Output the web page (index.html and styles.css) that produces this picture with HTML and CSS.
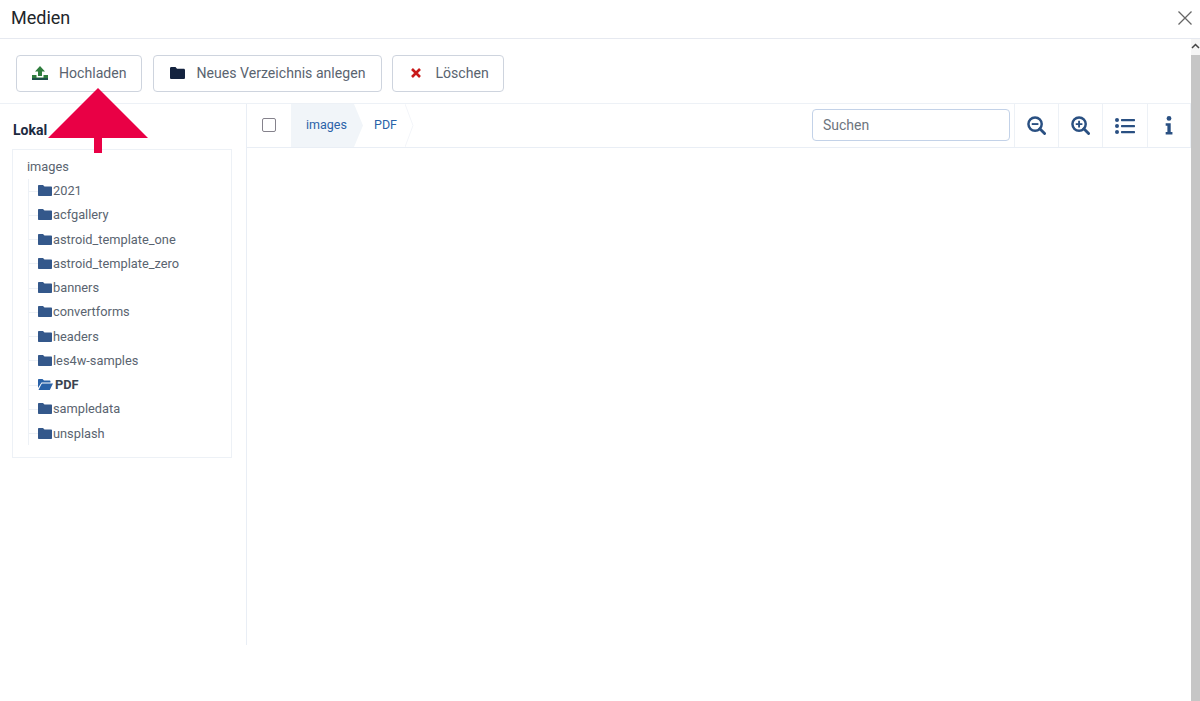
FILE: index.html
```html
<!DOCTYPE html>
<html lang="de">
<head>
<meta charset="utf-8">
<title>Medien</title>
<link rel="stylesheet" href="styles.css">
</head>
<body>
<div class="modal">
  <header class="modal-head">
    <h1 class="modal-title">Medien</h1>
    <svg class="close" width="16" height="16" viewBox="0 0 16 16"><path d="M1.500 1.500 14.500 14.500M14.500 1.500 1.500 14.500" stroke="#666" stroke-width="1.3" fill="none"/></svg>
  </header>
  <div class="modal-body">
    <div class="content">
      <div class="toolbar">
        <button class="btn btn-upload">
          <svg class="btn-ico" width="16" height="14" viewBox="0 0 16 14"><path d="M8 0 13 5.500H10V10H6V5.500H3Z" fill="#2f7d3e"/><path d="M0 9H4.500V11.500H11.500V9H16V14H0Z" fill="#2f7d3e"/><path d="M0 12H16V14H0Z" fill="#1f4f4a"/></svg>
          Hochladen
        </button>
        <button class="btn btn-new">
          <svg class="btn-ico folder-dark" width="15" height="12" viewBox="0 0 15 12"><path d="M0 1.300C0 .6.600 0 1.300 0H5.500L7 1.800H13.700C14.400 1.800 15 2.400 15 3.100V10.700C15 11.400 14.400 12 13.700 12H1.300C.6 12 0 11.400 0 10.700Z"/></svg>
          Neues Verzeichnis anlegen
        </button>
        <button class="btn btn-delete">
          <svg class="btn-ico" width="15" height="12" viewBox="0 0 15 12"><path d="M4 2 12 10M12 2 4 10" stroke="#c81a1a" stroke-width="2.600" fill="none"/></svg>
          Löschen
        </button>
      </div>
      <div class="workspace">
        <aside class="sidebar">
          <div class="sidebar-title">Lokal</div>
          <div class="tree">
            <div class="tree-root">images</div>
            <ul class="tree-list">
              <li class="tree-item"><svg class="fold" viewBox="0 0 14 11"><path d="M0 1C0 .4.400 0 1 0H5L6.500 1.500H13C13.600 1.500 14 1.900 14 2.500V10C14 10.600 13.600 11 13 11H1C.4 11 0 10.600 0 10Z"/></svg>2021</li>
              <li class="tree-item"><svg class="fold" viewBox="0 0 14 11"><path d="M0 1C0 .4.400 0 1 0H5L6.500 1.500H13C13.600 1.500 14 1.900 14 2.500V10C14 10.600 13.600 11 13 11H1C.4 11 0 10.600 0 10Z"/></svg>acfgallery</li>
              <li class="tree-item"><svg class="fold" viewBox="0 0 14 11"><path d="M0 1C0 .4.400 0 1 0H5L6.500 1.500H13C13.600 1.500 14 1.900 14 2.500V10C14 10.600 13.600 11 13 11H1C.4 11 0 10.600 0 10Z"/></svg>astroid_template_one</li>
              <li class="tree-item"><svg class="fold" viewBox="0 0 14 11"><path d="M0 1C0 .4.400 0 1 0H5L6.500 1.500H13C13.600 1.500 14 1.900 14 2.500V10C14 10.600 13.600 11 13 11H1C.4 11 0 10.600 0 10Z"/></svg>astroid_template_zero</li>
              <li class="tree-item"><svg class="fold" viewBox="0 0 14 11"><path d="M0 1C0 .4.400 0 1 0H5L6.500 1.500H13C13.600 1.500 14 1.900 14 2.500V10C14 10.600 13.600 11 13 11H1C.4 11 0 10.600 0 10Z"/></svg>banners</li>
              <li class="tree-item"><svg class="fold" viewBox="0 0 14 11"><path d="M0 1C0 .4.400 0 1 0H5L6.500 1.500H13C13.600 1.500 14 1.900 14 2.500V10C14 10.600 13.600 11 13 11H1C.4 11 0 10.600 0 10Z"/></svg>convertforms</li>
              <li class="tree-item"><svg class="fold" viewBox="0 0 14 11"><path d="M0 1C0 .4.400 0 1 0H5L6.500 1.500H13C13.600 1.500 14 1.900 14 2.500V10C14 10.600 13.600 11 13 11H1C.4 11 0 10.600 0 10Z"/></svg>headers</li>
              <li class="tree-item"><svg class="fold" viewBox="0 0 14 11"><path d="M0 1C0 .4.400 0 1 0H5L6.500 1.500H13C13.600 1.500 14 1.900 14 2.500V10C14 10.600 13.600 11 13 11H1C.4 11 0 10.600 0 10Z"/></svg>les4w-samples</li>
              <li class="tree-item active"><svg class="fold-open" viewBox="0 0 15 11"><path d="M0 1C0 .4.400 0 1 0H4.500L6 1.500H11.500C12.100 1.500 12.500 1.900 12.500 2.500V3.500H3.500L0 9Z"/><path d="M3.800 4.500H15L11.800 11H0.500Z"/></svg><span>PDF</span></li>
              <li class="tree-item"><svg class="fold" viewBox="0 0 14 11"><path d="M0 1C0 .4.400 0 1 0H5L6.500 1.500H13C13.600 1.500 14 1.900 14 2.500V10C14 10.600 13.600 11 13 11H1C.4 11 0 10.600 0 10Z"/></svg>sampledata</li>
              <li class="tree-item"><svg class="fold" viewBox="0 0 14 11"><path d="M0 1C0 .4.400 0 1 0H5L6.500 1.500H13C13.600 1.500 14 1.900 14 2.500V10C14 10.600 13.600 11 13 11H1C.4 11 0 10.600 0 10Z"/></svg>unsplash</li>
            </ul>
          </div>
        </aside>
        <main class="main">
          <div class="bar">
            <div class="check-cell"><span class="check"></span></div>
            <nav class="crumbs">
              <a class="crumb first">images</a>
              <a class="crumb second">PDF<svg class="chev" width="9" height="43" viewBox="0 0 9 43"><path d="M0 0 8 21.500 0 43" fill="none" stroke="#f3f5f9"/></svg></a>
            </nav>
            <div class="bar-right">
              <input class="search" type="text" placeholder="Suchen">
              <div class="tool"><svg width="19" height="19" viewBox="0 0 20 20"><circle cx="8.500" cy="8.500" r="7" fill="none" stroke="#2a5082" stroke-width="2.600"/><path d="M13.500 13.500 18.500 18.500" stroke="#2a5082" stroke-width="3" stroke-linecap="round"/><path d="M5 8.500H12" stroke="#2a5082" stroke-width="2"/></svg></div>
              <div class="tool"><svg width="19" height="19" viewBox="0 0 20 20"><circle cx="8.500" cy="8.500" r="7" fill="none" stroke="#2a5082" stroke-width="2.600"/><path d="M13.500 13.500 18.500 18.500" stroke="#2a5082" stroke-width="3" stroke-linecap="round"/><path d="M5 8.500H12M8.500 5V12" stroke="#2a5082" stroke-width="2"/></svg></div>
              <div class="tool wide"><svg width="20" height="16" viewBox="0 0 20 16"><g fill="#2a5082"><circle cx="2" cy="2" r="2"/><circle cx="2" cy="8" r="2"/><circle cx="2" cy="14" r="2"/><rect x="6" y="1" width="14" height="2.200" rx=".6"/><rect x="6" y="7" width="14" height="2.200" rx=".6"/><rect x="6" y="13" width="14" height="2.200" rx=".6"/></g></svg></div>
              <div class="tool info"><svg width="8" height="19" viewBox="0 0 8 20"><g fill="#2a5082"><circle cx="4" cy="2.500" r="2.500"/><path d="M.5 7.500H5.800V16.800H7.600V19.500H.5V16.800H2.300V10.200H.5Z"/></g></svg></div>
            </div>
          </div>
        </main>
      </div>
    </div>
    <div class="scrollbar">
      <svg class="scroll-up" width="9" height="6" viewBox="0 0 9 6"><path d="M1 5 4.500 1.500 8 5" fill="none" stroke="#444" stroke-width="1.500"/></svg>
      <div class="scroll-thumb"></div>
    </div>
  </div>
</div>
<svg class="arrow" width="100" height="65" viewBox="0 0 100 65"><path d="M50 0 100 50H54V65H46V50H0Z" fill="#e90045"/></svg>
</body>
</html>
```
FILE: styles.css
```css
* { box-sizing: border-box; }
html, body { margin: 0; height: 100%; }
body {
  font-family: Roboto, "Liberation Sans", sans-serif;
  color: #495057;
  background: #fff;
  overflow: hidden;
  position: relative;
}
.modal { display: flex; flex-direction: column; height: 701px; }
.modal-head {
  height: 39px;
  flex: none;
  display: flex;
  align-items: center;
  justify-content: space-between;
  padding: 0 7px 2px 11px;
  border-bottom: 1px solid #e6e9f0;
}
.modal-title { margin: 0; font-size: 18px; font-weight: 400; line-height: 22px; color: #22262a; }
.close { display: block; }
.modal-body { flex: 1; display: flex; min-height: 0; }
.content { flex: 1; min-width: 0; display: flex; flex-direction: column; }
.toolbar {
  height: 65px;
  flex: none;
  display: flex;
  gap: 11px;
  padding: 16px 0 0 16px;
  border-bottom: 1px solid #edf1f6;
}
.btn {
  height: 37px;
  display: flex;
  align-items: center;
  gap: 11px;
  padding: 0 14px 2px 15px;
  background: #fff;
  border: 1px solid #ced4de;
  border-radius: 4px;
  font: 400 14.100px Roboto, "Liberation Sans", sans-serif;
  color: #5a6470;
}
.btn-new { gap: 12px; padding-right: 16px; }
.btn-delete { gap: 12px; margin-left: -1px; }
.btn-ico { display: block; flex: none; }
.folder-dark { fill: #14233f; margin-left: 1px; }
.workspace { display: flex; height: 541px; flex: none; }
.sidebar { width: 247px; flex: none; border-right: 1px solid #e9eef5; padding: 0 14px 0 12px; }
.sidebar-title { font-size: 14px; font-weight: 700; color: #1c2a3f; height: 45px; padding: 18px 0 0 1px; }
.tree { border: 1px solid #edf1f6; height: 309px; padding: 8px 0 0 14px; }
.tree-root { font-size: 12.800px; line-height: 18px; color: #5a6470; }
.tree-list { list-style: none; margin: 2.500px 0 0 1px; padding: 0; border-left: 1px solid #edf1f6; }
.tree-item {
  height: 24.250px;
  display: flex;
  align-items: center;
  font-size: 12.800px;
  color: #5a6470;
  padding-left: 9px;
  position: relative;
  white-space: nowrap;
}
.tree-item::before {
  content: "";
  position: absolute;
  left: 0;
  top: 12px;
  width: 9px;
  border-top: 1px solid #edf1f6;
}
.fold { width: 14px; height: 11px; fill: #34588b; flex: none; margin-right: 1px; }
.fold-open { width: 15px; height: 11px; fill: #2a62a8; flex: none; margin-right: 2px; }
.active span { font-weight: 700; color: #3a4450; }
.main { flex: 1; min-width: 0; }
.bar {
  height: 44px;
  display: flex;
  border-bottom: 1px solid #e9eef5;
}
.check-cell { width: 44px; display: flex; align-items: center; justify-content: center; padding: 0 0 1px 0; }
.check { width: 14px; height: 14px; border: 1.500px solid #85828c; border-radius: 2px; display: block; }
.crumbs { display: flex; height: 43px; }
.crumb {
  display: flex;
  align-items: center;
  font-size: 12.500px;
  color: #2a62a8;
  padding-bottom: 2px;
}
.crumb.first {
  width: 72px;
  padding-left: 15px;
  background: #f1f5f9;
  clip-path: polygon(0 0, 63px 0, 100% 50%, 63px 100%, 0 100%);
}
.crumb.second { padding-left: 11px; }
.chev { margin: 2px 0 0 8px; display: block; flex: none; }
.bar-right { margin-left: auto; display: flex; align-items: stretch; }
.search {
  width: 198px;
  height: 32px;
  margin: 5px 4px 0 0;
  border: 1px solid #c3d2e8;
  border-radius: 4px;
  padding: 0 10px;
  font: 400 14px Roboto, "Liberation Sans", sans-serif;
  color: #495057;
  background: #fff;
}
.search::placeholder { color: #6d757e; opacity: 1; }
.tool {
  width: 44px;
  display: flex;
  align-items: center;
  justify-content: center;
  border-left: 1px solid #edf1f6;
}
.tool.wide { width: 45px; }
.tool.info { width: 44px; padding-right: 1px; border-right: 1px solid #edf1f6; }
.scrollbar {
  width: 9px;
  flex: none;
  display: flex;
  flex-direction: column;
  background: #f5f5f5;
}
.scroll-up { display: block; margin-top: 4px; flex: none; }
.scroll-thumb { flex: 1; background: #c6c6c6; margin-top: 6px; }
.arrow { position: absolute; left: 48px; top: 88px; display: block; }
```
